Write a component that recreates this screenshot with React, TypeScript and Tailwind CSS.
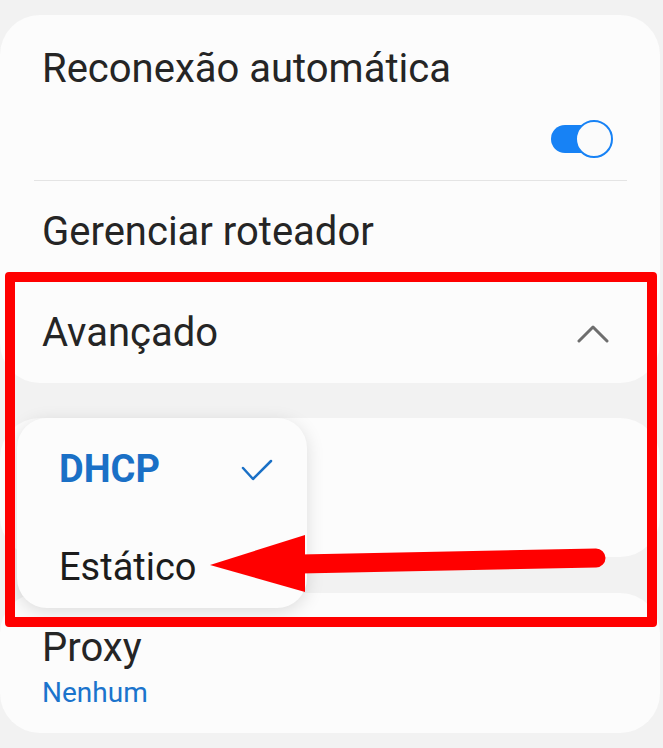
import React from 'react';

const font = { fontFamily: 'Roboto, "Noto Sans", sans-serif' };

const Toggle: React.FC = () => (
  <div className="relative w-[62px] h-[38px]">
    <div className="absolute left-0 top-[5px] w-[52px] h-[28px] rounded-full bg-[#1782f5]" />
    <div className="absolute right-0 top-0 w-[38px] h-[38px] rounded-full bg-[#fbfbfb] border-[2.5px] border-[#1782f5]" />
  </div>
);

export default function App() {
  return (
    <div
      className="relative w-[663px] h-[748px] overflow-hidden bg-[#f2f2f2] pt-[15px] text-[#252525]"
      style={font}
    >
      {/* Card 1 */}
      <div className="w-[660px] rounded-[40px] bg-[#fcfcfc] pt-[34px] pb-[30px]">
        <div className="pl-[42px] text-[40px] leading-none h-[40px]">Reconexão automática</div>
        <div className="flex justify-end pr-[47px] mt-[31px]">
          <Toggle />
        </div>
        <div className="mt-[22px] ml-[34px] mr-[33px] h-px bg-[#e4e4e4]" />
        <div className="pl-[42px] mt-[31px] text-[40px] leading-none h-[40px]">Gerenciar roteador</div>
        <div className="flex items-center justify-between pl-[42px] pr-[51px] mt-[61px] h-[40px]">
          <span className="text-[40px] leading-none">Avançado</span>
          <svg width="32" height="20" viewBox="0 0 32 20" fill="none">
            <path d="M2 18 L16 4 L30 18" stroke="#6e6e6e" strokeWidth="3" strokeLinecap="round" strokeLinejoin="round" />
          </svg>
        </div>
      </div>

      {/* Card 2 */}
      <div className="w-[660px] mt-[35px] h-[139px] rounded-[40px] bg-[#fcfcfc]" />

      {/* Card 3 */}
      <div className="w-[660px] mt-[36px] h-[140px] rounded-[40px] bg-[#fcfcfc] pt-[35px] pl-[42px]">
        <div className="text-[40px] leading-none h-[40px]">Proxy</div>
        <div className="mt-[11px] text-[28px] leading-none text-[#1b74cc]">Nenhum</div>
      </div>

      {/* Dropdown popup */}
      <div className="absolute left-[17px] top-[418px] w-[290px] h-[190px] rounded-[30px] bg-[#fcfcfc] shadow-[0_4px_18px_rgba(0,0,0,0.13)] pt-[32px] pl-[42px] pr-[34px]">
        <div className="flex items-center justify-between h-[38px]">
          <span className="text-[38px] leading-none font-bold text-[#1a70c6]">DHCP</span>
          <svg width="32" height="24" viewBox="0 0 32 24" fill="none" className="mt-[2px]">
            <path d="M2 10 L12 21 L30 3" stroke="#1a70c6" strokeWidth="2.5" strokeLinecap="round" strokeLinejoin="round" />
          </svg>
        </div>
        <div className="mt-[60px] text-[38px] leading-none text-[#1c1c1c]">Estático</div>
      </div>

      {/* Annotation: red frame */}
      <div className="absolute left-[5px] top-[272px] w-[652px] h-[355px] border-[10px] border-[#ff0000] rounded-[4px]" />

      {/* Annotation: arrow */}
      <svg className="absolute left-0 top-0" width="663" height="748" viewBox="0 0 663 748">
        <path d="M300 564 L596 558" stroke="#ff0000" strokeWidth="19" strokeLinecap="round" />
        <polygon points="210,565 305,535 305,592" fill="#ff0000" />
      </svg>
    </div>
  );
}
